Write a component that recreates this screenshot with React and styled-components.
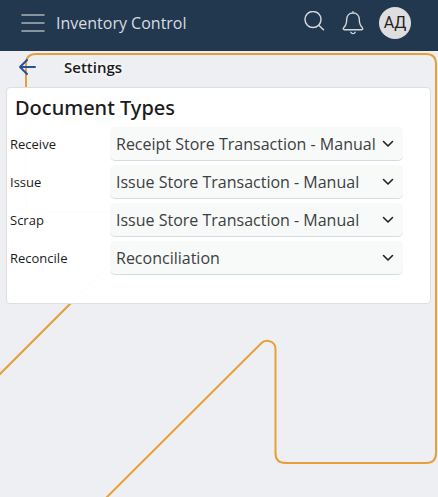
import React from "react";
import styled, { createGlobalStyle } from "styled-components";

const GlobalStyle = createGlobalStyle`
  * { box-sizing: border-box; }
  body {
    margin: 0;
    background: #eeeff3;
    color: #1b1b1b;
    font-family: "Open Sans", "Noto Sans", sans-serif;
  }
`;

const Page = styled.div`
  position: relative;
  min-height: 100vh;
  overflow: hidden;
`;

const Backdrop = styled.svg`
  position: absolute;
  inset: 0;
  width: 100%;
  height: 100%;
  z-index: -1;
  fill: none;
  stroke: #e99f37;
  stroke-width: 2;
`;

const Header = styled.header`
  display: flex;
  align-items: center;
  height: 51px;
  padding: 0 27px 5px 20px;
  background: #22384f;
`;

const IconButton = styled.button`
  display: flex;
  flex: none;
  padding: 0;
  border: 0;
  background: none;
  color: ${(p) => p.$color || "#d3d7dc"};
  cursor: pointer;

  svg {
    display: block;
    fill: none;
    stroke: currentColor;
    stroke-linecap: round;
    stroke-linejoin: round;
  }
`;

const AppTitle = styled.span`
  flex: 1;
  margin-left: 10px;
  color: #d9dce0;
  font-size: 16px;
  line-height: 24px;
  white-space: nowrap;
`;

const HeaderActions = styled.div`
  display: flex;
  align-items: center;
  gap: 14px;
`;

const Avatar = styled.button`
  width: 32px;
  height: 32px;
  padding: 0;
  border: 0;
  border-radius: 50%;
  background: #dedede;
  color: #1f1f1f;
  font: 16px/32px Roboto, sans-serif;
  text-align: center;
`;

const TitleBar = styled.div`
  display: flex;
  align-items: center;
  gap: 26px;
  height: 36px;
  padding: 0 18px 4px;
`;

const PageTitle = styled.h1`
  margin: 0;
  font-size: 15px;
  font-weight: 600;
  line-height: 24px;
  text-shadow: 0 0 4px #fff, 0 0 8px #fff;
`;

const Card = styled.section`
  margin: 0 7px 0 6px;
  padding: 5px 27px 28px 3px;
  border: 1px solid #dcdee2;
  border-radius: 4px;
  background: rgba(255, 255, 255, 0.98);
`;

const CardTitle = styled.h2`
  margin: 0 0 4px;
  padding-left: 5px;
  font-family: "Noto Sans", "Open Sans", sans-serif;
  font-size: 20px;
  font-weight: 500;
  line-height: 30px;
`;

const Fields = styled.div`
  display: grid;
  gap: 4px;
`;

const Field = styled.div`
  display: grid;
  grid-template-columns: 100px minmax(0, 1fr);
  align-items: center;
`;

const Label = styled.label`
  font-size: 13px;
  line-height: 20px;
`;

const SelectWrap = styled.div`
  position: relative;

  svg {
    position: absolute;
    top: 50%;
    right: 9px;
    transform: translateY(-50%);
    fill: none;
    stroke: #202325;
    stroke-width: 1.6;
    stroke-linecap: round;
    stroke-linejoin: round;
    pointer-events: none;
  }
`;

const Select = styled.select`
  display: block;
  width: 100%;
  height: 34px;
  padding: 0 28px 0 6px;
  appearance: none;
  border: 0;
  border-bottom: 1px solid #d3dbe5;
  border-radius: 5px;
  background: #f8faf9;
  color: #3c403f;
  font: 16px/24px "Open Sans", "Noto Sans", sans-serif;
`;

const documentTypes = [
  { id: "receive", label: "Receive", value: "Receipt Store Transaction - Manual" },
  { id: "issue", label: "Issue", value: "Issue Store Transaction - Manual" },
  { id: "scrap", label: "Scrap", value: "Issue Store Transaction - Manual" },
  { id: "reconcile", label: "Reconcile", value: "Reconciliation" },
];

export default function App() {
  return (
    <Page>
      <GlobalStyle />
      <Backdrop viewBox="0 0 438 497" preserveAspectRatio="xMaxYMin slice" aria-hidden="true">
        <path d="M106 498L261 343.500C266 338.500 275.500 341 275.500 349V453Q275.500 463 285.500 463H426Q436 463 436 453V64Q436 54 426 54H36Q26 54 26 64V202Q26 212 36 212H143Q160 212 149 225L-1 375" />
      </Backdrop>
      <Header>
        <IconButton type="button" aria-label="Menu" $color="#a9b1bb">
          <svg width="26" height="20" viewBox="0 0 26 20" strokeWidth="1.6">
            <path d="M2 2H24M2 10H24M2 18H24" />
          </svg>
        </IconButton>
        <AppTitle>Inventory Control</AppTitle>
        <HeaderActions>
          <IconButton type="button" aria-label="Search">
            <svg width="24" height="24" viewBox="0 0 24 24" strokeWidth="1.5">
              <circle cx="10" cy="8.5" r="8" />
              <path d="M15.8 14.3L20.5 18.7" />
            </svg>
          </IconButton>
          <IconButton type="button" aria-label="Notifications">
            <svg width="24" height="24" viewBox="0 0 24 24" strokeWidth="1.4">
              <path d="M12 .8V2M12 2C8 2 5.7 4.8 5.7 8.5C5.7 13.2 4.6 14.8 2.8 16.6C1.8 17.7 2.1 18.7 3.5 18.7H20.5C21.9 18.7 22.2 17.7 21.2 16.6C19.4 14.8 18.3 13.2 18.3 8.5C18.3 4.8 16 2 12 2ZM9.8 21.3C10.5 23 13.5 23 14.2 21.3" />
            </svg>
          </IconButton>
          <Avatar type="button">АД</Avatar>
        </HeaderActions>
      </Header>
      <main>
        <TitleBar>
          <IconButton type="button" aria-label="Back" $color="#2450a4">
            <svg width="20" height="18" viewBox="0 0 20 18" strokeWidth="2">
              <path d="M17 9H2M9 2L2 9L9 16" />
            </svg>
          </IconButton>
          <PageTitle>Settings</PageTitle>
        </TitleBar>
        <Card>
          <CardTitle>Document Types</CardTitle>
          <Fields>
            {documentTypes.map(({ id, label, value }) => (
              <Field key={id}>
                <Label htmlFor={id}>{label}</Label>
                <SelectWrap>
                  <Select id={id} defaultValue={value}>
                    <option>{value}</option>
                  </Select>
                  <svg width="12" height="8" viewBox="0 0 12 8" aria-hidden="true">
                    <path d="M1.5 1.5L6 6L10.5 1.5" />
                  </svg>
                </SelectWrap>
              </Field>
            ))}
          </Fields>
        </Card>
      </main>
    </Page>
  );
}
